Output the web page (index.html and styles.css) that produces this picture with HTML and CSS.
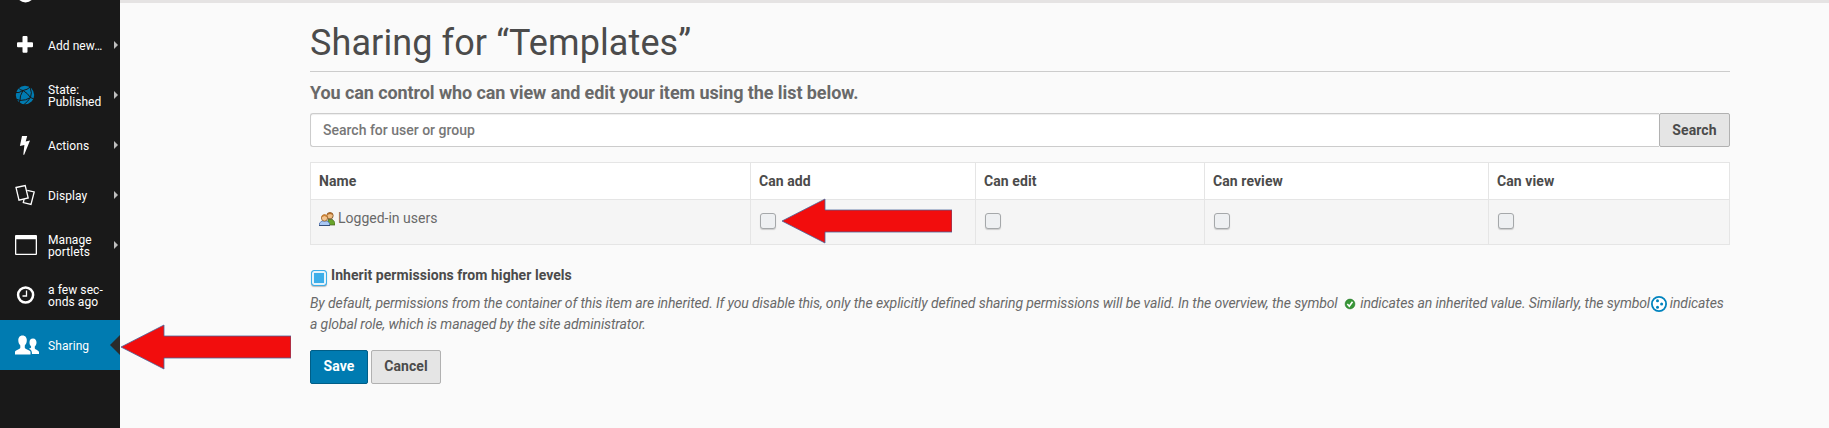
FILE: index.html
```html
<!DOCTYPE html>
<html lang="en">
<head>
<meta charset="utf-8">
<title>Sharing for “Templates”</title>
<link rel="stylesheet" href="styles.css">
</head>
<body>
<div class="page">
  <nav class="toolbar">
    <div class="item first"><svg class="icon" viewBox="0 0 50 20"><circle cx="25.500" cy="-6.500" r="9" fill="#fff"/></svg></div>
    <a class="item more"><svg class="icon" viewBox="0 0 50 50"><path fill="#fff" d="M23.500 16h3a1 1 0 0 1 1 1v5.200h4.500a1 1 0 0 1 1 1v3a1 1 0 0 1-1 1h-4.500v4.500a1 1 0 0 1-1 1h-3a1 1 0 0 1-1-1v-4.500H18a1 1 0 0 1-1-1v-3a1 1 0 0 1 1-1h4.500V17a1 1 0 0 1 1-1z"/></svg><span>Add new…</span></a>
    <a class="item more"><svg class="icon" viewBox="0 0 50 50"><circle cx="25" cy="25" r="9.200" fill="#007bb1"/><path fill="none" stroke="#191919" stroke-width="1" d="M18 17.500Q20 20.500 23 20.500Q27 20 31 16.500M23 20.500Q18.500 23.500 15.500 22.500M23 20.500Q19.500 26 20 30.500L16 29M20 30.500Q26 30.500 30.500 27.500Q27.500 23 23 20.500M30.500 27.500Q32.500 23 30 17M30.500 27.500L34 29M30.500 27.500Q28 31.500 24 34.500M20 30.500L19 33"/></svg><span>State:<br>Published</span></a>
    <a class="item more"><svg class="icon" viewBox="0 0 50 50"><path fill="#fff" d="M22 16h5.200l-1.500 5.500 4.300-.9-5.800 14.200h-.9l1.100-9.800-4.500 1z"/></svg><span>Actions</span></a>
    <a class="item more"><svg class="icon" viewBox="0 0 50 50"><g fill="none" stroke="#fff" stroke-width="1.300"><path d="M16 17.500l9.200-2 3 12.500-9.200 2.200z"/><path d="M27.200 20.300l7 1.600-3.200 12.500-7.700-1.800.8-3.500"/></g></svg><span>Display</span></a>
    <a class="item more"><svg class="icon" viewBox="0 0 50 50"><path fill="#fff" fill-rule="evenodd" d="M16 15h20a1 1 0 0 1 1 1v18a1 1 0 0 1-1 1H16a1 1 0 0 1-1-1V16a1 1 0 0 1 1-1zm.3 4.200v14.500h19.400V19.200z"/></svg><span>Manage<br>portlets</span></a>
    <a class="item"><svg class="icon" viewBox="0 0 50 50"><circle cx="25.600" cy="25" r="7.500" fill="none" stroke="#fff" stroke-width="2.500"/><path d="M26.500 20.500V26h-4" fill="none" stroke="#fff" stroke-width="1.300"/></svg><span>a few sec-<br>onds ago</span></a>
    <a class="item active"><svg class="icon" viewBox="0 0 50 50"><g fill="#fff"><path d="M22.500 15.500c3 0 4.300 2.300 4.300 4.800 0 2.300-.7 3.800-2 5.200v2.200c0 1.300 5.700 2.300 5.700 4.300V34.500H15V32c0-2 5.300-3 5.300-4.300v-2.200c-1.300-1.400-2-2.900-2-5.200 0-2.500 1.300-4.800 4.200-4.800z"/><path d="M33 18.500c2.400 0 3.500 1.800 3.500 3.900 0 1.900-.7 3-1.700 4.200v1.600c0 1.500 4.200 1.800 4.200 4V34H32c0-3.300-1-4-3-5.200 1.500-.6 2.100-.8 2.100-1.500v-.9c-1.100-1.200-1.600-2.200-1.600-4 0-2.200 1.100-3.900 3.500-3.900z"/></g></svg><span>Sharing</span></a>
  </nav>
  <main class="main">
    <h1>Sharing for “Templates”</h1>
    <p class="lead">You can control who can view and edit your item using the list below.</p>
    <form class="search"><input type="text" placeholder="Search for user or group"><button type="button" class="btn">Search</button></form>
    <table>
      <colgroup><col class="c1"><col class="c2"><col class="c3"><col class="c4"><col class="c5"></colgroup>
      <thead><tr><th>Name</th><th>Can add</th><th>Can edit</th><th>Can review</th><th>Can view</th></tr></thead>
      <tbody><tr>
        <td><div class="user"><svg class="users" viewBox="0 0 16 14"><path d="M9 7.500h4.500l2.500 3V13H9z" fill="#69a52a" stroke="#455c20" stroke-width=".7"/><circle cx="11" cy="3.700" r="3.200" fill="#efbd82" stroke="#754d22" stroke-width=".8"/><path d="M7.800 3C8-.5 14-.5 14.200 3L11 2z" fill="#b06b29"/><path d="M.5 13.500V11L3 9h5l2.500 2v2.500z" fill="#a9c8f4" stroke="#5273b1" stroke-width=".8"/><path d="M0 13.500h11" stroke="#34507c"/><circle cx="5.500" cy="6" r="3.100" fill="#f5c58f" stroke="#93602b" stroke-width=".8"/><path d="M2.300 5.500C2.500 1 8.500 1 8.700 5.500L5.500 4z" fill="#c98135"/></svg><span>Logged-in users</span></div></td>
        <td><i class="check"></i></td><td><i class="check"></i></td><td><i class="check"></i></td><td><i class="check"></i></td>
      </tr></tbody>
    </table>
    <div class="inherit"><i class="check on"></i><b>Inherit permissions from higher levels</b></div>
    <p class="help">By default, permissions from the container of this item are inherited. If you disable this, only the explicitly defined sharing permissions will be valid. In the overview, the symbol <svg class="ok" viewBox="0 0 16 16"><circle cx="8" cy="8" r="4.900" fill="#379637" stroke="#26792a" stroke-width=".6"/><path d="M5.300 8l2 2.200 3.200-4.500" fill="none" stroke="#fff" stroke-width="1.600"/></svg> indicates an inherited value. Similarly, the symbol <svg class="global" viewBox="0 0 16 16"><circle cx="8" cy="8" r="7.100" fill="#fff" stroke="#0083be" stroke-width="1.800"/><g fill="#0083be"><circle cx="6.500" cy="4.700" r="1.500"/><circle cx="10.600" cy="8" r="1.500"/><circle cx="6.500" cy="11.300" r="1.500"/></g></svg> indicates<br>a global role, which is managed by the site administrator.</p>
    <div class="actions"><button type="button" class="btn primary">Save</button><button type="button" class="btn">Cancel</button></div>
  </main>
  <svg class="arrow arrow-side" viewBox="0 0 170 46"><path d="M0 23L43 1v11h127v22H43v11z"/></svg>
  <svg class="arrow arrow-cell" viewBox="0 0 170 46"><path d="M0 23L43 1v11h127v22H43v11z"/></svg>
</div>
</body>
</html>
```
FILE: styles.css
```css
* { box-sizing: border-box; }
body { margin: 0; background: #fafafa; color: #696969; font: 15px/21px Roboto, sans-serif; }
.page { display: flex; height: 428px; overflow: hidden; position: relative; }
.toolbar { width: 120px; flex: none; background: #191919; color: #fff; }
.item { display: flex; align-items: center; position: relative; height: 50px; font-size: 12px; line-height: 12px; letter-spacing: .08px; white-space: nowrap; }
.item span { padding-top: 1px; }
.item .icon { width: 50px; height: 50px; flex: none; margin-right: -2px; }
.item.first { height: 20px; }
.item.first .icon { height: 20px; }
.item.more::after { content: ""; position: absolute; left: 114px; top: 21px; border: 4px solid transparent; border-left-color: #bdbdbd; border-right: 0; }
.item.active { background: #007bb1; }
.item.active::after { content: ""; position: absolute; right: 0; top: 15px; border: 10px solid transparent; border-right-color: #2b2b2b; border-left: 0; }
.main { flex: 1; min-width: 0; border-top: 3px solid #e5e3e3; padding: 15px 99px 0 190px; }
h1 { margin: 0; height: 54px; border-bottom: 1px solid #ccc; color: #4b4b4b; font-size: 36px; line-height: 50px; font-weight: 400; letter-spacing: .1px; }
.lead { margin: 10px 0 9px; font-size: 18px; line-height: 22px; font-weight: 700; letter-spacing: -.085px; }
.search { display: flex; height: 34px; margin-bottom: 15px; }
.search input { flex: 1; height: 34px; border: 1px solid #ccc; border-right: 0; border-radius: 3px 0 0 3px; padding: 0 12px; background: #fff; box-shadow: inset 0 1px 1px #eee; font: 500 14px/20px Roboto, sans-serif; }
.search input::placeholder { color: #777; opacity: 1; }
.btn { height: 34px; border: 1px solid #b1b1b1; border-radius: 2px; padding: 0 12px 1px; background: #e5e5e5; color: #4b4b4b; font: 700 14px/20px Roboto, sans-serif; letter-spacing: .1px; }
.search .btn { width: 71px; padding: 0; }
table { width: 1420px; table-layout: fixed; border-collapse: collapse; }
.c1 { width: 440px; } .c2 { width: 225px; } .c3 { width: 229px; } .c4 { width: 284px; } .c5 { width: 241px; }
th, td { border: 1px solid #e5e5e5; padding: 0 8px; text-align: left; }
th { height: 37px; background: #fff; color: #4b4b4b; font-size: 14px; font-weight: 700; letter-spacing: .08px; }
td { height: 45px; background: #f5f5f5; vertical-align: top; }
.user { display: flex; align-items: center; gap: 3px; height: 37px; font-size: 14px; }
.user span { margin-top: -1px; }
.users { width: 16px; height: 14px; }
.check { display: block; width: 16px; height: 16px; margin: 13px 0 0 1px; border: 1px solid #a5a8aa; border-radius: 3px; background: #eef0f2; box-shadow: 0 1px 1px #ccc; }
.inherit { display: flex; gap: 4px; height: 20px; margin-top: 20px; color: #4b4b4b; font-size: 14px; line-height: 20px; letter-spacing: .05px; }
.check.on { margin: 5px 0 0 1px; flex: none; border-color: #3daee9; background: #3daee9; box-shadow: inset 0 0 0 2px #e6f3fb, 0 1px 1px #bbb; }
.help { margin: 8px 0 15px; font-size: 14px; line-height: 21px; font-style: italic; letter-spacing: -.105px; white-space: nowrap; }
.help svg { width: 16px; height: 16px; vertical-align: -4px; }
.help .ok { margin: 0 -1px 0 1px; }
.help .global { margin: 0 -1px 0 -2px; }
.actions { display: flex; gap: 3px; }
.actions .btn { width: 70px; padding: 0 0 2px; }
.actions .btn.primary { width: 58px; background: #007bb1; border-color: #005e87; color: #fff; }
.arrow { position: absolute; width: 170px; height: 46px; fill: #f20d0d; stroke: #49649b; stroke-width: .8; }
.arrow-side { left: 121px; top: 324px; }
.arrow-cell { left: 782px; top: 198px; }
```
